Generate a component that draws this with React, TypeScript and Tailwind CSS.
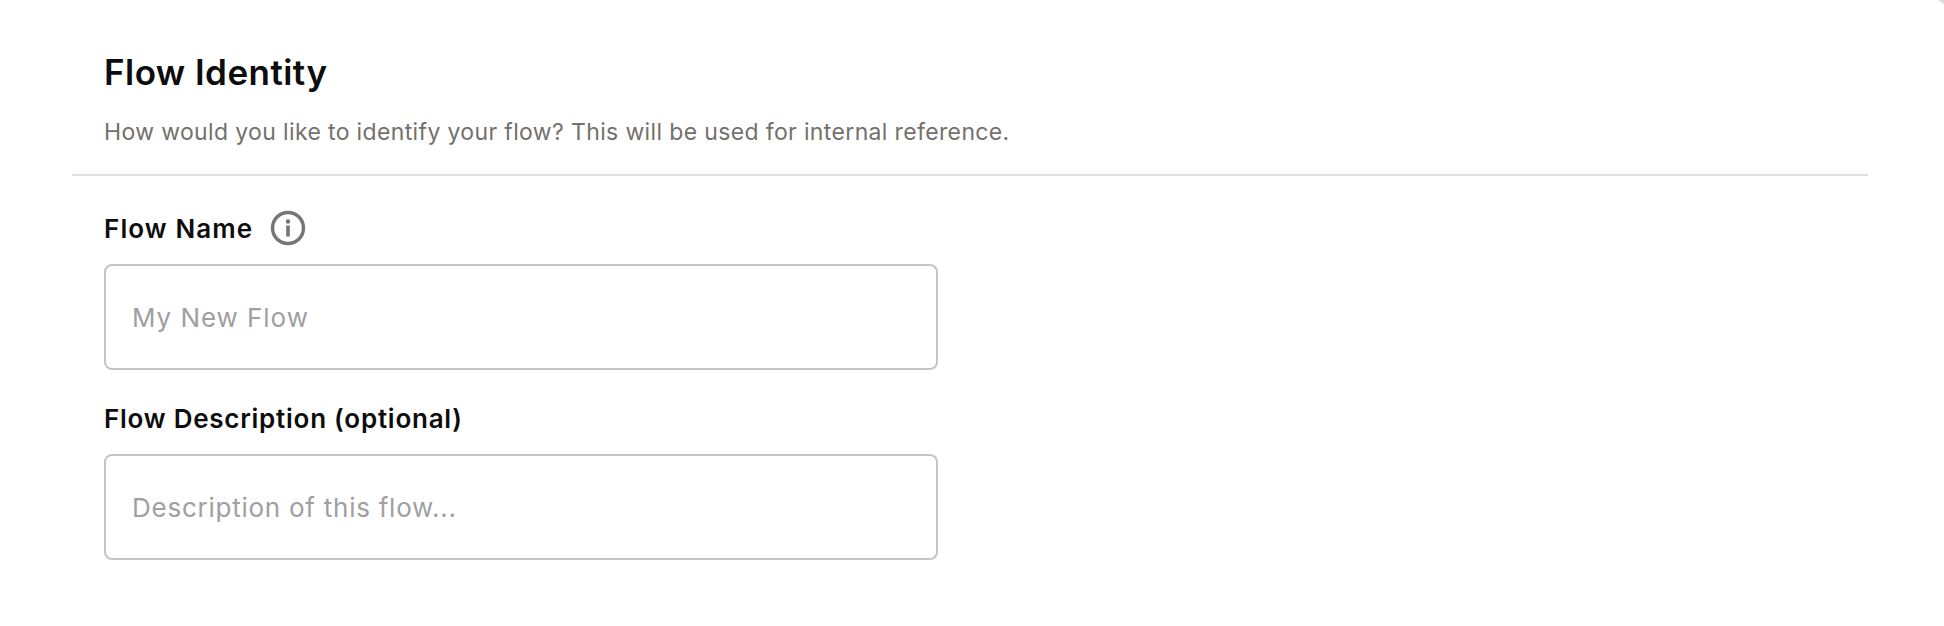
export default function App() {
  return (
    <div className="w-[1944px] h-[626px] bg-white overflow-hidden relative font-['Inter',sans-serif]">
      <svg className="absolute top-0 right-0" width="6" height="4" viewBox="0 0 6 4"><polygon points="0,0 6,0 6,4" fill="#d9d9d9" /></svg>
      <div className="ml-[72px] mr-[76px] pt-[49px]">
        <div className="pl-[32px] pb-[26px] border-b-2 border-[#e0e0e0]">
          <h1 className="text-[35px] leading-[46px] font-semibold tracking-[0.45px] text-[#0d0d0d]">Flow Identity</h1>
          <p className="mt-[21px] text-[23px] leading-[32px] tracking-[0.36px] text-[#73716c]">How would you like to identify your flow? This will be used for internal reference.</p>
        </div>
        <div className="pl-[32px] pt-[34px] w-[866px] flex flex-col">
          <div className="flex items-center gap-[17px] h-[36px] mb-[18px]">
            <label className="text-[26px] font-semibold tracking-[1.1px] text-[#0d0d0d]">Flow Name</label>
            <svg width="36" height="36" viewBox="0 0 36 36" fill="none">
              <circle cx="18" cy="18" r="15.5" stroke="#757575" strokeWidth="3.4" />
              <circle cx="18" cy="11.5" r="2.2" fill="#757575" />
              <rect x="16.2" y="15.5" width="3.6" height="11" fill="#757575" />
            </svg>
          </div>
          <input placeholder="My New Flow" className="h-[106px] w-full border-2 border-[#c4c4c4] rounded-[8px] px-[26px] text-[26px] tracking-[0.95px] placeholder:text-[#a0a0a0] outline-none" />
          <label className="mt-[30px] mb-[18px] h-[36px] flex items-center text-[26px] font-semibold tracking-[0.75px] text-[#0d0d0d]">Flow Description (optional)</label>
          <input placeholder="Description of this flow..." className="h-[106px] w-full border-2 border-[#c4c4c4] rounded-[8px] px-[26px] text-[26px] tracking-[0.75px] placeholder:text-[#a0a0a0] outline-none" />
        </div>
      </div>
    </div>
  );
}
